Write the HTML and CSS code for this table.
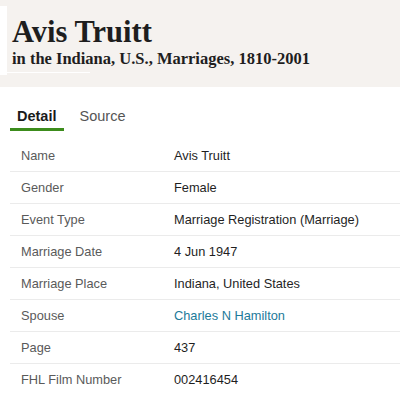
FILE: index.html
```html
<!DOCTYPE html>
<html>
<head>
<meta charset="utf-8">
<link rel="stylesheet" href="styles.css">
</head>
<body>
<header class="hero">
  <span class="mark-v"></span>
  <span class="mark-h"></span>
  <h1 class="title">Avis Truitt</h1>
  <p class="subtitle">in the Indiana, U.S., Marriages, 1810-2001</p>
</header>
<nav class="tabs">
  <span class="tab active">Detail</span>
  <span class="tab">Source</span>
</nav>
<table class="facts">
  <tr><th>Name</th><td>Avis Truitt</td></tr>
  <tr><th>Gender</th><td>Female</td></tr>
  <tr><th>Event Type</th><td>Marriage Registration (Marriage)</td></tr>
  <tr><th>Marriage Date</th><td>4 Jun 1947</td></tr>
  <tr><th>Marriage Place</th><td>Indiana, United States</td></tr>
  <tr><th>Spouse</th><td><a class="link" href="#">Charles N Hamilton</a></td></tr>
  <tr><th>Page</th><td>437</td></tr>
  <tr><th>FHL Film Number</th><td>002416454</td></tr>
</table>
</body>
</html>
```
FILE: styles.css
```css
html, body { margin: 0; padding: 0; background: #fff; }
body { width: 400px; height: 407px; overflow: hidden; font-family: "Liberation Sans", Arial, sans-serif; }
.hero {
  position: relative;
  background: #f5f2ef;
  height: 87px;
  padding: 14px 0 0 12px;
  box-sizing: border-box;
}
.mark-v { position: absolute; left: 0; top: 6px; width: 7px; height: 69px; background: #fff; }
.mark-h { position: absolute; left: 7px; top: 72px; width: 83px; height: 1px; background: #fff; }
.title {
  margin: 0;
  font-family: "Liberation Serif", "Times New Roman", serif;
  font-weight: 700;
  font-size: 30.5px;
  line-height: 36px;
  color: #1e1e1e;
}
.subtitle {
  margin: 0;
  font-family: "Liberation Serif", "Times New Roman", serif;
  font-weight: 700;
  font-size: 16.5px;
  line-height: 17px;
  color: #1e1e1e;
}
.tabs {
  display: flex;
  margin: 17px 0 0 10px;
  height: 27px;
}
.tab {
  font-size: 14.5px;
  color: #555;
  padding: 0 7px;
  line-height: 24px;
  border-bottom: 3px solid transparent;
  margin-right: 9px;
}
.tab.active { color: #1a1a1a; font-weight: 700; border-bottom-color: #3c8c1c; }
.facts {
  margin: 9px 0 0 10px;
  width: 390px;
  border-collapse: collapse;
  font-size: 12.8px;
}
.facts tr { border-bottom: 1px solid #ebebeb; }
.facts tr:last-child { border-bottom: none; }
.facts th, .facts td {
  height: 31px;
  padding: 0;
  text-align: left;
  vertical-align: middle;
}
.facts th { font-weight: 400; color: #5a5a5a; width: 153px; padding-left: 11px; }
.facts td { color: #1f1f1f; }
.link { color: #1d7a9a; text-decoration: none; }
```
